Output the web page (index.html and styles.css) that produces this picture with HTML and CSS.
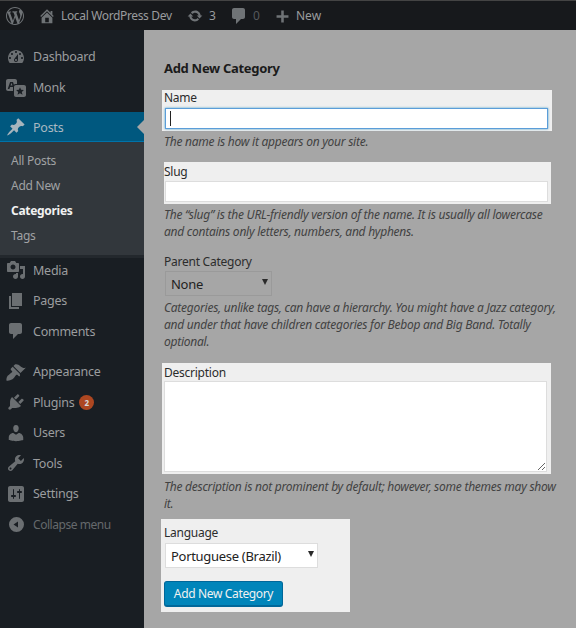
FILE: index.html
```html
<!DOCTYPE html>
<html lang="en">
<head>
    <meta charset="UTF-8">
    <meta name="viewport" content="width=device-width, initial-scale=1.0">
    <title>Add New Category</title>
    <link rel="stylesheet" href="styles.css">
</head>
<body>

<svg class="sprite" xmlns="http://www.w3.org/2000/svg">
    <symbol id="i-wp" viewBox="0 0 20 20"><path d="M20 10c0-5.51-4.49-10-10-10C4.48 0 0 4.49 0 10c0 5.52 4.48 10 10 10 5.51 0 10-4.48 10-10zM7.78 15.37L4.37 6.22c.55-.02 1.17-.08 1.17-.08.5-.06.44-1.13-.06-1.11 0 0-1.45.11-2.37.11-.18 0-.37 0-.58-.01C4.12 2.69 6.87 1.11 10 1.11c2.33 0 4.45.87 6.05 2.34-.68-.11-1.65.39-1.65 1.58 0 .74.45 1.36.9 2.1.35.61.55 1.36.55 2.46 0 1.49-1.4 5-1.4 5l-3.03-8.37c.54-.02.82-.17.82-.17.5-.05.44-1.25-.06-1.22 0 0-1.44.12-2.38.12-.87 0-2.33-.12-2.33-.12-.5-.03-.56 1.2-.06 1.22l.92.08 1.26 3.41zM17.41 10c.24-.64.74-1.87.43-4.25.7 1.29 1.05 2.71 1.05 4.25 0 3.29-1.73 6.24-4.4 7.78.97-2.59 1.94-5.2 2.92-7.78zM6.1 18.09C3.12 16.65 1.11 13.53 1.11 10c0-1.3.23-2.48.72-3.59C3.25 10.3 4.67 14.2 6.1 18.09zm4.03-6.63l2.58 6.98c-.86.29-1.76.45-2.71.45-.79 0-1.57-.11-2.29-.33.81-2.38 1.62-4.74 2.42-7.1z"/></symbol>
    <symbol id="i-home" viewBox="0 0 20 20"><path d="M16 8.5l1.53 1.53-1.06 1.06L10 4.62l-6.47 6.47-1.06-1.06L10 2.5l4 4v-2h2v4zm-6-2.46l6 5.99V18H4v-5.97zM12 17v-5H8v5h4z"/></symbol>
    <symbol id="i-update" viewBox="0 0 20 20"><path d="M10.2 3.28c3.53 0 6.43 2.61 6.92 6h2.08l-3.5 4-3.5-4h2.32c-.45-1.97-2.21-3.44-4.32-3.44-1.45 0-2.73.71-3.54 1.78L4.95 5.66C6.23 4.2 8.11 3.28 10.2 3.28zm-.4 13.44c-3.52 0-6.43-2.61-6.92-6H.8l3.5-4c1.17 1.33 2.33 2.67 3.5 4H5.48c.45 1.97 2.21 3.44 4.32 3.44 1.45 0 2.73-.71 3.54-1.78l1.71 1.96c-1.28 1.46-3.15 2.38-5.25 2.38z"/></symbol>
    <symbol id="i-comment" viewBox="0 0 20 20"><path d="M5 2h9c1.1 0 2 .9 2 2v7c0 1.1-.9 2-2 2h-2l-5 5v-5H5c-1.1 0-2-.9-2-2V4c0-1.1.9-2 2-2z"/></symbol>
    <symbol id="i-plus" viewBox="0 0 20 20"><path d="M17 8.5v3h-5.5V17h-3v-5.5H3v-3h5.5V3h3v5.5z"/></symbol>
    <symbol id="i-dashboard" viewBox="0 0 20 20"><path d="M3.76 16h12.48c1.1-1.37 1.76-3.11 1.76-5 0-4.42-3.58-8-8-8s-8 3.58-8 8c0 1.89.66 3.63 1.76 5zM10 4c.55 0 1 .45 1 1s-.45 1-1 1-1-.45-1-1 .45-1 1-1zM6 6c.55 0 1 .45 1 1s-.45 1-1 1-1-.45-1-1 .45-1 1-1zm8 0c.55 0 1 .45 1 1s-.45 1-1 1-1-.45-1-1 .45-1 1-1zm-5.37 5.55L12 7v6c0 1.1-.9 2-2 2s-2-.9-2-2c0-.57.24-1.08.63-1.45zM4 10c.55 0 1 .45 1 1s-.45 1-1 1-1-.45-1-1 .45-1 1-1zm12 0c.55 0 1 .45 1 1s-.45 1-1 1-1-.45-1-1 .45-1 1-1zm-5 3c0-.55-.45-1-1-1s-1 .45-1 1 .45 1 1 1 1-.45 1-1z"/></symbol>
    <symbol id="i-monk" viewBox="0 0 20 20"><path d="M11 7H9.5c-.6 0-1.2.3-1.6.7L7 5H4.1l-2.4 7h1.7l.7-2H7v4H2c-1.1 0-2-.9-2-2V4c0-1.1.9-2 2-2h7c1.1 0 2 .9 2 2v3zM6.5 8.6h-2l1-2.9z"/><path fill-rule="evenodd" d="M10 8h8c1.1 0 2 .9 2 2v8c0 1.1-.9 2-2 2h-8c-1.1 0-2-.9-2-2v-8c0-1.1.9-2 2-2zm4 2.2l-1.1 2.6-2.8.2 2.1 1.9-.7 2.8 2.5-1.5 2.5 1.5-.7-2.8 2.1-1.9-2.8-.2z"/></symbol>
    <symbol id="i-pin" viewBox="0 0 20 20"><path d="M10.44 3.02l1.82-1.82 6.36 6.35-1.83 1.82c-1.05-.68-2.48-.57-3.41.36l-.75.75c-.92.93-1.04 2.35-.35 3.41l-1.83 1.82-2.41-2.41-2.8 2.79c-.42.42-3.38 2.71-3.8 2.29s1.86-3.39 2.28-3.81l2.79-2.79L4.1 9.36l1.83-1.82c1.05.69 2.48.57 3.4-.36l.75-.75c.93-.92 1.05-2.35.36-3.41z"/></symbol>
    <symbol id="i-media" viewBox="0 0 20 20"><path d="M13 11V4c0-.55-.45-1-1-1h-1.67L9 1H5L3.67 3H2c-.55 0-1 .45-1 1v7c0 .55.45 1 1 1h10c.55 0 1-.45 1-1zM7 4.5c1.38 0 2.5 1.12 2.5 2.5S8.38 9.5 7 9.5 4.5 8.38 4.5 7 5.62 4.5 7 4.5zM14 6h5v10.5c0 1.38-1.12 2.5-2.5 2.5S14 17.88 14 16.5s1.12-2.5 2.5-2.5c.17 0 .34.02.5.05V9h-3V6zm-4 8.05V13h2v3.5c0 1.38-1.12 2.5-2.5 2.5S7 17.88 7 16.5 8.12 14 9.5 14c.17 0 .34.02.5.05z"/></symbol>
    <symbol id="i-pages" viewBox="0 0 20 20"><path d="M6 15V2h10v13H6zm-1 1h8v2H3V5h2v11z"/></symbol>
    <symbol id="i-appearance" viewBox="0 0 20 20"><path d="M14.48 11.06L7.41 3.99l1.5-1.5c.5-.56 2.3-.47 3.51.32 1.21.8 1.43 1.28 2.91 2.1 1.18.64 2.45 1.26 4.45.85zm-.71.71L6.7 4.7 4.93 6.47c-.39.39-.39 1.02 0 1.41l1.06 1.06c.39.39.39 1.03 0 1.42-.6.6-1.43 1.11-2.21 1.69-.35.26-.7.53-1.01.84C1.43 13.23.78 15.27.53 16.5c-.27 1.2-.1 2.24.16 2.29.26.05 1.1-.14 2.29-.41 1.23-.25 3.27-.9 4.61-2.24.31-.31.58-.66.84-1.01.58-.78 1.09-1.61 1.69-2.21.39-.39 1.03-.39 1.42 0l1.06 1.06c.39.39 1.02.39 1.41 0z"/></symbol>
    <symbol id="i-plugins" viewBox="0 0 20 20"><path d="M13.11 4.36L9.87 7.6 8 5.73l3.24-3.24c.35-.34 1.05-.2 1.56.32.52.51.66 1.21.31 1.55zm-8 1.77l.91-1.12 9.01 9.01-1.19.84c-.71.71-2.63 1.16-3.82 1.16H6.14L4.9 17.26c-.59.59-1.54.59-2.12 0-.59-.58-.59-1.53 0-2.12l1.24-1.24v-3.88c0-1.13.4-3.19 1.09-3.89zm7.26 3.97l3.24-3.24c.34-.35 1.04-.21 1.55.31.52.51.66 1.21.31 1.55l-3.24 3.25z"/></symbol>
    <symbol id="i-users" viewBox="0 0 20 20"><path d="M10 9.25c-2.27 0-2.73-3.44-2.73-3.44C7 4.02 7.82 2 9.97 2c2.16 0 2.98 2.02 2.71 3.81 0 0-.41 3.44-2.68 3.44zm0 2.57L12.72 10c2.39 0 4.52 2.33 4.52 4.53v2.49s-3.65 1.13-7.24 1.13c-3.65 0-7.24-1.13-7.24-1.13v-2.49c0-2.25 1.94-4.48 4.47-4.48z"/></symbol>
    <symbol id="i-tools" viewBox="0 0 20 20"><path d="M16.68 9.77c-1.34 1.34-3.3 1.67-4.95.99l-5.41 6.52c-.99.99-2.59.99-3.58 0s-.99-2.59 0-3.57l6.52-5.42c-.68-1.65-.35-3.61.99-4.95 1.28-1.28 3.12-1.62 4.72-1.06l-2.89 2.89 2.82 2.82 2.86-2.87c.53 1.58.18 3.39-1.08 4.65zM3.81 16.21c.4.39 1.04.39 1.43 0 .4-.4.4-1.04 0-1.43-.39-.4-1.03-.4-1.43 0-.39.39-.39 1.03 0 1.43z"/></symbol>
    <symbol id="i-settings" viewBox="0 0 20 20"><path d="M18 16V4c0-1.1-.9-2-2-2H4c-1.1 0-2 .9-2 2v12c0 1.1.9 2 2 2h12c1.1 0 2-.9 2-2zM8 11h1c.55 0 1 .45 1 1s-.45 1-1 1H8v1.5c0 .28-.22.5-.5.5s-.5-.22-.5-.5V13H6c-.55 0-1-.45-1-1s.45-1 1-1h1V5.5c0-.28.22-.5.5-.5s.5.22.5.5V11zm5-2h-1c-.55 0-1-.45-1-1s.45-1 1-1h1V5.5c0-.28.22-.5.5-.5s.5.22.5.5V7h1c.55 0 1 .45 1 1s-.45 1-1 1h-1v5.5c0 .28-.22.5-.5.5s-.5-.22-.5-.5V9z"/></symbol>
    <symbol id="i-collapse" viewBox="0 0 20 20"><path d="M10 20A10 10 0 1 0 10 0a10 10 0 0 0 0 20zm2-14v8l-6-4z"/></symbol>
</svg>

<header class="admin-bar">
    <svg class="bar-icon wp-logo"><use href="#i-wp"/></svg>
    <svg class="bar-icon home-icon"><use href="#i-home"/></svg>
    <span class="bar-text site-name">Local WordPress Dev</span>
    <svg class="bar-icon update-icon"><use href="#i-update"/></svg>
    <span class="bar-text update-count">3</span>
    <svg class="bar-icon comment-icon"><use href="#i-comment"/></svg>
    <span class="bar-text comment-count">0</span>
    <svg class="bar-icon plus-icon"><use href="#i-plus"/></svg>
    <span class="bar-text new-label">New</span>
</header>

<div class="wrap">
    <nav class="sidebar">
        <a class="menu-item"><svg class="menu-icon"><use href="#i-dashboard"/></svg>Dashboard</a>
        <a class="menu-item"><svg class="menu-icon"><use href="#i-monk"/></svg>Monk</a>
        <a class="menu-item current"><svg class="menu-icon"><use href="#i-pin"/></svg>Posts</a>
        <ul class="submenu">
            <li>All Posts</li>
            <li>Add New</li>
            <li class="active">Categories</li>
            <li>Tags</li>
        </ul>
        <a class="menu-item"><svg class="menu-icon"><use href="#i-media"/></svg>Media</a>
        <a class="menu-item"><svg class="menu-icon"><use href="#i-pages"/></svg>Pages</a>
        <a class="menu-item"><svg class="menu-icon"><use href="#i-comment"/></svg>Comments</a>
        <a class="menu-item item-appearance"><svg class="menu-icon"><use href="#i-appearance"/></svg>Appearance</a>
        <a class="menu-item"><svg class="menu-icon"><use href="#i-plugins"/></svg>Plugins<span class="badge">2</span></a>
        <a class="menu-item"><svg class="menu-icon"><use href="#i-users"/></svg>Users</a>
        <a class="menu-item"><svg class="menu-icon"><use href="#i-tools"/></svg>Tools</a>
        <a class="menu-item"><svg class="menu-icon"><use href="#i-settings"/></svg>Settings</a>
        <a class="menu-item collapse"><svg class="menu-icon"><use href="#i-collapse"/></svg>Collapse menu</a>
    </nav>

    <main class="content">
        <h2>Add New Category</h2>

        <div class="panel panel-name">
            <label for="tag-name">Name</label>
            <div class="caret-box">
                <input id="tag-name" class="focused" type="text">
                <span class="caret"></span>
            </div>
        </div>
        <p class="help">The name is how it appears on your site.</p>

        <div class="panel panel-slug">
            <label for="tag-slug">Slug</label>
            <input id="tag-slug" type="text">
        </div>
        <p class="help">The “slug” is the URL-friendly version of the name. It is usually all lowercase and contains only letters, numbers, and hyphens.</p>

        <div class="parent-field">
            <label for="parent">Parent Category</label>
            <div class="select-box parent-select">
                <select id="parent"><option>None</option></select>
            </div>
        </div>
        <p class="help">Categories, unlike tags, can have a hierarchy. You might have a Jazz category, and under that have children categories for Bebop and Big Band. Totally optional.</p>

        <div class="panel panel-desc">
            <label for="description">Description</label>
            <textarea id="description"></textarea>
        </div>
        <p class="help">The description is not prominent by default; however, some themes may show it.</p>

        <div class="panel panel-lang">
            <label for="language">Language</label>
            <div class="select-box lang-select">
                <select id="language"><option>Portuguese (Brazil)</option></select>
            </div>
            <button type="button">Add New Category</button>
        </div>
    </main>
</div>

</body>
</html>
```

FILE: styles.css
```css
* {
    box-sizing: border-box;
}

html, body {
    height: 100%;
}

body {
    margin: 0;
    overflow: hidden;
    background: #a6a6a6;
    font-family: "Noto Sans", "Open Sans", sans-serif;
    font-size: 12px;
    letter-spacing: -0.25px;
    color: #2c2c2c;
}

.sprite {
    display: none;
}

svg {
    fill: currentColor;
}

/* admin bar */
.admin-bar {
    display: flex;
    align-items: center;
    height: 30px;
    border-top: 1px solid #444;
    background: #17191c;
    color: #6f7376;
    font-size: 12px;
    letter-spacing: -0.35px;
}

.bar-icon {
    flex: none;
    width: 20px;
    height: 20px;
    margin-top: 1px;
}

.wp-logo {
    width: 18px;
    height: 18px;
    margin-left: 6px;
}

.home-icon {
    width: 18px;
    height: 18px;
    margin-left: 14px;
}

.site-name {
    flex: none;
    width: 112px;
    margin-left: 5px;
    white-space: nowrap;
}

.update-icon {
    width: 16px;
    height: 16px;
    margin-left: 14px;
}

.update-count {
    width: 6px;
    margin-left: 6px;
}

.comment-icon {
    margin-left: 14px;
}

.plus-icon {
    width: 17px;
    height: 17px;
    margin-left: 15px;
}

.bar-text {
    color: #9a9c9e;
}

.bar-text.comment-count {
    width: 6px;
    margin-left: 4px;
    color: #55585b;
}

.new-label {
    margin-left: 5px;
    letter-spacing: 0;
}

/* left menu */
.wrap {
    display: flex;
    height: 598px;
}

.sidebar {
    flex: none;
    width: 144px;
    background: #191e23;
    padding-top: 11.5px;
    color: #9b9d9f;
    font-size: 12.5px;
}

.menu-item {
    display: flex;
    align-items: center;
    height: 30.5px;
    padding-left: 6px;
}

.menu-icon {
    flex: none;
    width: 20px;
    height: 20px;
    margin-right: 7px;
    color: #6b6f72;
}

.current {
    position: relative;
    height: 30px;
    margin-top: 9.5px;
    padding-top: 1px;
    background: #00587f;
    border-bottom: 1px solid #0073aa;
    color: #a9b9c2;
}

.current .menu-icon {
    color: #a6b5bd;
}

/* notch pointing at the content area */
.current::after {
    content: "";
    position: absolute;
    right: 0;
    top: 8px;
    border: 7px solid transparent;
    border-right-color: #a6a6a6;
    border-left-width: 0;
}

.submenu {
    list-style: none;
    margin: 0 0 -3px;
    padding: 5.5px 0 7.5px;
    background: #32373c;
    border-bottom: 3px solid #23282d;
    color: #a0a2a4;
    font-size: 12px;
}

.submenu li {
    height: 25px;
    line-height: 25px;
    padding-left: 11px;
}

.submenu .active {
    color: #f1f1f1;
    font-weight: 700;
    letter-spacing: -0.3px;
}

.item-appearance {
    margin-top: 10px;
}

.badge {
    width: 15px;
    height: 15px;
    margin-left: 5px;
    border-radius: 50%;
    background: #ad4721;
    color: #d9d9d9;
    font-size: 8px;
    font-weight: 700;
    line-height: 15px;
    letter-spacing: 0;
    text-align: center;
}

.collapse {
    color: #65696c;
    font-size: 12px;
    letter-spacing: -0.45px;
}

.collapse .menu-icon {
    width: 15px;
    height: 15px;
    margin: 0 9px 0 3px;
}

/* form */
.content {
    flex: 1;
    min-width: 0;
    padding: 29px 16px 0 20px;
}

h2 {
    margin: 0 0 13px;
    font-size: 13px;
    line-height: 18px;
    font-weight: 700;
    letter-spacing: -0.3px;
    color: #1b1b1b;
}

label {
    display: block;
    line-height: 14px;
}

.panel {
    background: #efefef;
}

.panel-name {
    width: 390px;
    height: 41px;
    margin-left: -2px;
    padding: 0 2px;
}

.panel-name label {
    height: 18px;
    padding-top: 1px;
}

.panel-slug {
    width: 387px;
    height: 42px;
    margin-top: 12px;
}

.panel-slug label {
    height: 19px;
    padding-top: 3px;
}

.panel-slug input {
    margin-left: 1px;
}

.panel-desc label {
    height: 18px;
    padding-top: 3px;
}

.caret-box {
    position: relative;
    margin-left: 1px;
}

.caret {
    position: absolute;
    left: 5px;
    top: 3px;
    width: 1px;
    height: 15px;
    background: #222;
}

input {
    display: block;
    width: 383px;
    height: 21px;
    padding: 0 5px;
    border: 1px solid #ddd;
    background: #fff;
    outline: none;
}

.focused {
    border-color: #5b9dd9;
    box-shadow: 0 0 2px rgba(30, 140, 190, 0.8);
}

.help {
    margin: 0;
    padding-top: 2px;
    font-size: 12px;
    font-style: italic;
    line-height: 17px;
    color: #424242;
}

.parent-field {
    margin-top: 13px;
}

.parent-field label {
    line-height: 18px;
}

.parent-field + .help {
    padding-top: 3px;
}

.select-box {
    position: relative;
    margin: 0 0 0 1px;
}

.select-box::after {
    content: "";
    position: absolute;
    top: 8px;
    right: 4px;
    border: 3px solid transparent;
    border-top: 6px solid #2a2a2a;
    border-bottom-width: 0;
    pointer-events: none;
}

.parent-select {
    width: 107px;
}

.lang-select {
    width: 153px;
    margin-top: 3px;
}

select {
    display: block;
    width: 100%;
    height: 25px;
    padding: 0 5px;
    appearance: none;
    border: 1px solid #9a9a9a;
    border-radius: 0;
    background: #a6a6a6;
    color: #222;
    font: inherit;
    font-size: 13px;
    letter-spacing: -0.3px;
}

.lang-select select {
    border-color: #ddd;
    background: #fff;
}

.panel-desc {
    width: 389px;
    height: 111px;
    margin: 13px 0 0 -2px;
    padding: 0 2px;
}

.panel-desc + .help {
    padding-top: 4px;
}

textarea {
    display: block;
    width: 383px;
    height: 91px;
    border: 1px solid #ddd;
    background: #fff;
    outline: none;
}

.panel-lang {
    width: 189px;
    height: 93px;
    margin: 7px 0 0 -3px;
    padding: 7px 0 0 3px;
}

button {
    display: block;
    width: 119px;
    height: 26px;
    margin: 13px 0 0;
    padding: 0;
    border: 1px solid #006799;
    border-bottom-width: 2px;
    border-radius: 3px;
    background: #0085ba;
    color: #f1f1f1;
    font: inherit;
    font-size: 12px;
    letter-spacing: -0.35px;
}
```
